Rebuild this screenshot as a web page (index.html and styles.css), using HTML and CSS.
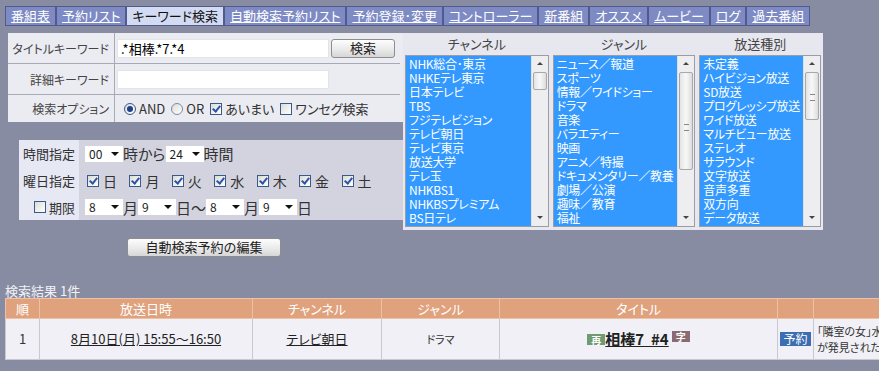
FILE: index.html
```html
<!DOCTYPE html>
<html lang="ja">
<head>
    <meta charset="UTF-8">
    <title>キーワード検索</title>
    <link rel="stylesheet" href="styles.css">
</head>
<body>

    <!-- Tabs -->
    <div class="tabs">
        <a href="#">番組表</a>
        <a href="#">予約リスト</a>
        <span class="active">キーワード検索</span>
        <a href="#">自動検索予約リスト</a>
        <a href="#">予約登録･変更</a>
        <a href="#">コントローラー</a>
        <a href="#">新番組</a>
        <a href="#">オススメ</a>
        <a href="#">ムービー</a>
        <a href="#">ログ</a>
        <a href="#">過去番組</a>
    </div>

    <div class="main">
        <div class="left">
            <!-- Keyword form -->
            <div class="form">
                <div class="lbl">タイトルキーワード</div>
                <div class="val"><input class="txt" type="text" value=".*相棒.*7.*4"><button class="btn search">検索</button></div>
                <div class="lbl">詳細キーワード</div>
                <div class="val"><input class="txt" type="text"></div>
                <div class="lbl last">検索オプション</div>
                <div class="val last opts">
                    <span class="radio on"></span>AND
                    <span class="radio"></span>OR
                    <span class="chk on"></span>あいまい
                    <span class="chk"></span>ワンセグ検索
                </div>
            </div>

            <!-- Time / weekday / period -->
            <div class="timebox">
                <div class="tlbl">時間指定</div>
                <div class="tval"><span class="sel">00</span>時から<span class="sel">24</span>時間</div>
                <div class="tlbl">曜日指定</div>
                <div class="tval days">
                    <span class="day"><span class="chk on"></span>日</span>
                    <span class="day"><span class="chk on"></span>月</span>
                    <span class="day"><span class="chk on"></span>火</span>
                    <span class="day"><span class="chk on"></span>水</span>
                    <span class="day"><span class="chk on"></span>木</span>
                    <span class="day"><span class="chk on"></span>金</span>
                    <span class="day"><span class="chk on"></span>土</span>
                </div>
                <div class="tlbl"><span class="chk"></span>期限</div>
                <div class="tval"><span class="sel">8</span>月<span class="sel">9</span>日～<span class="sel">8</span>月<span class="sel">9</span>日</div>
            </div>

            <div class="edit"><button class="btn wide">自動検索予約の編集</button></div>
        </div>

        <!-- Filters -->
        <div class="filters">
            <div class="fcol c1">
                <div class="fhead">チャンネル</div>
                <div class="listbox">
                    <div class="items">
                        <div>NHK総合･東京</div>
                        <div>NHKEテレ東京</div>
                        <div>日本テレビ</div>
                        <div>TBS</div>
                        <div>フジテレビジョン</div>
                        <div>テレビ朝日</div>
                        <div>テレビ東京</div>
                        <div>放送大学</div>
                        <div>テレ玉</div>
                        <div>NHKBS1</div>
                        <div>NHKBSプレミアム</div>
                        <div>BS日テレ</div>
                    </div>
                    <div class="sbar">
                        <div class="arrow up"></div>
                        <div class="track"><div class="thumb" style="height: 16px;"></div></div>
                        <div class="arrow down"></div>
                    </div>
                </div>
            </div>
            <div class="fcol c2">
                <div class="fhead">ジャンル</div>
                <div class="listbox">
                    <div class="items">
                        <div>ニュース／報道</div>
                        <div>スポーツ</div>
                        <div>情報／ワイドショー</div>
                        <div>ドラマ</div>
                        <div>音楽</div>
                        <div>バラエティー</div>
                        <div>映画</div>
                        <div>アニメ／特撮</div>
                        <div>ドキュメンタリー／教養</div>
                        <div>劇場／公演</div>
                        <div>趣味／教育</div>
                        <div>福祉</div>
                    </div>
                    <div class="sbar">
                        <div class="arrow up"></div>
                        <div class="track"><div class="thumb grip" style="height: 96px;"></div></div>
                        <div class="arrow down"></div>
                    </div>
                </div>
            </div>
            <div class="fcol c3">
                <div class="fhead">放送種別</div>
                <div class="listbox">
                    <div class="items">
                        <div>未定義</div>
                        <div>ハイビジョン放送</div>
                        <div>SD放送</div>
                        <div>プログレッシブ放送</div>
                        <div>ワイド放送</div>
                        <div>マルチビュー放送</div>
                        <div>ステレオ</div>
                        <div>サラウンド</div>
                        <div>文字放送</div>
                        <div>音声多重</div>
                        <div>双方向</div>
                        <div>データ放送</div>
                    </div>
                    <div class="sbar">
                        <div class="arrow up"></div>
                        <div class="track"><div class="thumb grip" style="height: 46px;"></div></div>
                        <div class="arrow down"></div>
                    </div>
                </div>
            </div>
        </div>
    </div>

    <!-- Results -->
    <div class="count">検索結果 1件</div>
    <table class="results">
        <colgroup>
            <col style="width: 34px;">
            <col style="width: 213px;">
            <col style="width: 129px;">
            <col style="width: 118px;">
            <col style="width: 278px;">
            <col style="width: 36px;">
            <col style="width: 160px;">
        </colgroup>
        <tr class="head">
            <td>順</td>
            <td>放送日時</td>
            <td>チャンネル</td>
            <td>ジャンル</td>
            <td>タイトル</td>
            <td></td>
            <td></td>
        </tr>
        <tr class="row">
            <td>1</td>
            <td><a href="#">8月10日(月) 15:55～16:50</a></td>
            <td><a href="#">テレビ朝日</a></td>
            <td class="genre">ドラマ</td>
            <td><span class="mark re">再</span><a href="#" class="title">相棒7 &nbsp;#4</a> <span class="mark ji">字</span></td>
            <td><span class="rsv">予約</span></td>
            <td class="desc">「隣室の女」水谷豊<br>が発見された。</td>
        </tr>
    </table>

</body>
</html>
```

FILE: styles.css
```css
body {
    margin: 0;
    padding: 6px 5px 0;
    background-color: #888ca2;
    font-family: "Noto Sans CJK JP", sans-serif;
    font-feature-settings: "palt";
    font-size: 13px;
    color: #333;
    overflow: hidden;
}

/* Tabs */
.tabs {
    display: inline-flex;
    gap: 2px;
    background-color: #525a8c;
    border: 1px solid #525a8c;
}

.tabs a,
.tabs span {
    background-color: #7d8ac4;
    color: #fff;
    padding: 0 5px;
    line-height: 18px;
    font-size: 13px;
}

.tabs .active {
    background-color: #d3dbf3;
    color: #111;
}

/* Layout */
.main {
    display: flex;
    margin-top: 7px;
}

.left {
    width: 398px;
}

/* Keyword form */
.form {
    display: grid;
    grid-template-columns: 107px 285px;
    grid-template-rows: 31px 31px 27px;
    margin-left: 3px;
    background-color: #ebebf2;
}

.lbl {
    display: flex;
    align-items: center;
    justify-content: flex-end;
    padding-right: 5px;
    border-right: 1px solid #a8a8b6;
    border-bottom: 1px solid #a8a8b6;
    color: #444;
    font-size: 12px;
    white-space: nowrap;
}

.val {
    display: flex;
    align-items: center;
    padding-left: 2px;
    border-bottom: 1px solid #a8a8b6;
}

.lbl.last,
.val.last {
    border-bottom: none;
}

.txt {
    width: 204px;
    height: 17px;
    padding: 0 3px;
    border: 1px solid #e4e4e8;
    background: #fff;
    font-family: inherit;
    font-size: 13px;
    color: #000;
    box-sizing: content-box;
}

.btn {
    font-family: inherit;
    font-size: 13px;
    color: #222;
    background: linear-gradient(#fdfdfd, #e8e8e8 60%, #d6d6d6);
    border: 1px solid #8e8e8e;
    border-radius: 3px;
    padding: 0;
    height: 19px;
    line-height: 16px;
}

.btn.search {
    width: 64px;
    margin-left: 2px;
}

.btn.wide {
    width: 154px;
}

.opts {
    gap: 3px;
    padding-left: 9px;
    font-size: 13px;
}

.opts .radio,
.opts .chk {
    margin-left: 3px;
}

.opts .radio:first-child {
    margin-left: 0;
}

/* Checkboxes and radios */
.chk,
.radio {
    display: inline-block;
    position: relative;
    width: 10px;
    height: 10px;
    border: 1px solid #3a5a8c;
    background: linear-gradient(135deg, #dcdcd6, #fff);
    vertical-align: -1px;
}

.radio {
    border-radius: 50%;
    border-color: #7a8aa8;
}

.chk.on::after {
    content: "";
    position: absolute;
    left: 3px;
    top: 0;
    width: 3px;
    height: 6px;
    border: solid #2b55a8;
    border-width: 0 2px 2px 0;
    transform: rotate(40deg);
}

.radio.on {
    border-color: #3a5a8c;
}

.radio.on::after {
    content: "";
    position: absolute;
    left: 2px;
    top: 2px;
    width: 6px;
    height: 6px;
    border-radius: 50%;
    background: #1f3f8a;
}

/* Time box */
.timebox {
    display: grid;
    grid-template-columns: 60px 305px;
    grid-template-rows: 27px 27px 26px;
    margin: 18px 0 0 14px;
    background-color: #d3d3df;
}

.tlbl {
    display: flex;
    align-items: center;
    justify-content: flex-end;
    gap: 3px;
    padding-right: 4px;
    background-color: #e6e8f3;
    color: #333;
}

.tval {
    display: flex;
    align-items: center;
    padding-left: 6px;
    font-size: 15px;
    color: #333;
}

.sel {
    position: relative;
    display: inline-block;
    width: 34px;
    height: 16px;
    padding-left: 4px;
    background: #fff;
    font-size: 12px;
    line-height: 16px;
    color: #222;
}

.sel::after {
    content: "";
    position: absolute;
    right: 4px;
    top: 6px;
    border: 4px solid transparent;
    border-top: 4px solid #111;
    border-bottom: none;
}

.days {
    padding-left: 8px;
}

.day {
    width: 44px;
    display: flex;
    align-items: center;
    gap: 4px;
    font-size: 14px;
}

.edit {
    margin-top: 17px;
    text-align: center;
}

/* Filters */
.filters {
    display: flex;
    gap: 4px;
    width: 416px;
    height: 194px;
    padding: 0 2px 3px;
    background-color: #e7e7ef;
}

.c1 { width: 144px; }
.c2 { width: 143px; }
.c3 { width: 122px; }

.fhead {
    height: 22px;
    line-height: 22px;
    text-align: center;
    font-size: 13px;
    color: #444;
}

.listbox {
    display: flex;
    height: 170px;
    border: 1px solid #9c9ca4;
    background-color: #3399ff;
}

.items {
    flex: 1;
    overflow: hidden;
    padding: 1px 0 0 3px;
    color: #fff;
    font-size: 12px;
    line-height: 14px;
    letter-spacing: -0.3px;
    white-space: nowrap;
}

.sbar {
    width: 16px;
    display: flex;
    flex-direction: column;
    background-color: #eeeef0;
    border-left: 1px solid #e0e0e0;
}

.arrow {
    position: relative;
    height: 16px;
}

.arrow::after {
    content: "";
    position: absolute;
    left: 5px;
    top: 6px;
    border: 3px solid transparent;
}

.arrow.up::after {
    border-bottom: 3px solid #444;
    border-top: none;
}

.arrow.down::after {
    border-top: 3px solid #444;
    border-bottom: none;
}

.track {
    flex: 1;
}

.thumb {
    position: relative;
    margin: 0 1px;
    border: 1px solid #a8a8a8;
    border-radius: 2px;
    background: linear-gradient(90deg, #e4e4e4, #f8f8f8 50%, #dcdcdc);
}

.thumb.grip::after {
    content: "";
    position: absolute;
    left: 4px;
    bottom: 40%;
    width: 5px;
    height: 5px;
    border-top: 1px solid #888;
    border-bottom: 1px solid #888;
}

/* Results */
.count {
    margin-top: 27px;
    line-height: 14px;
    color: #f2f2f6;
    font-size: 13px;
}

.results {
    border-collapse: collapse;
    table-layout: fixed;
    width: 968px;
    border: 1px solid #cfcfd8;
}

.results td {
    text-align: center;
    padding: 0;
    border: 1px solid #c8c8d2;
}

.results .head td {
    height: 19px;
    background-color: #e0a17d;
    color: #fff;
    font-size: 13px;
    border-color: #ecc1a6;
}

.results .row td {
    height: 40px;
    background-color: #f0f0f6;
    color: #333;
}

.results a {
    color: #222;
}

.results .genre {
    font-size: 11px;
}

.mark {
    display: inline-block;
    padding: 0 4px;
    font-size: 10px;
    line-height: 11px;
    color: #fff;
    font-weight: bold;
    vertical-align: 1px;
}

.mark.re {
    background-color: #6f9b70;
}

.mark.ji {
    background-color: #8b6b72;
    vertical-align: 4px;
}

.title {
    font-size: 15px;
    font-weight: bold;
}

.rsv {
    display: inline-block;
    padding: 0 3px;
    font-size: 12px;
    line-height: 14px;
    color: #fff;
    background-color: #3b6db0;
}

.results .desc {
    text-align: left;
    padding-left: 3px;
    font-size: 11px;
    line-height: 16px;
    white-space: nowrap;
    overflow: hidden;
}
```
